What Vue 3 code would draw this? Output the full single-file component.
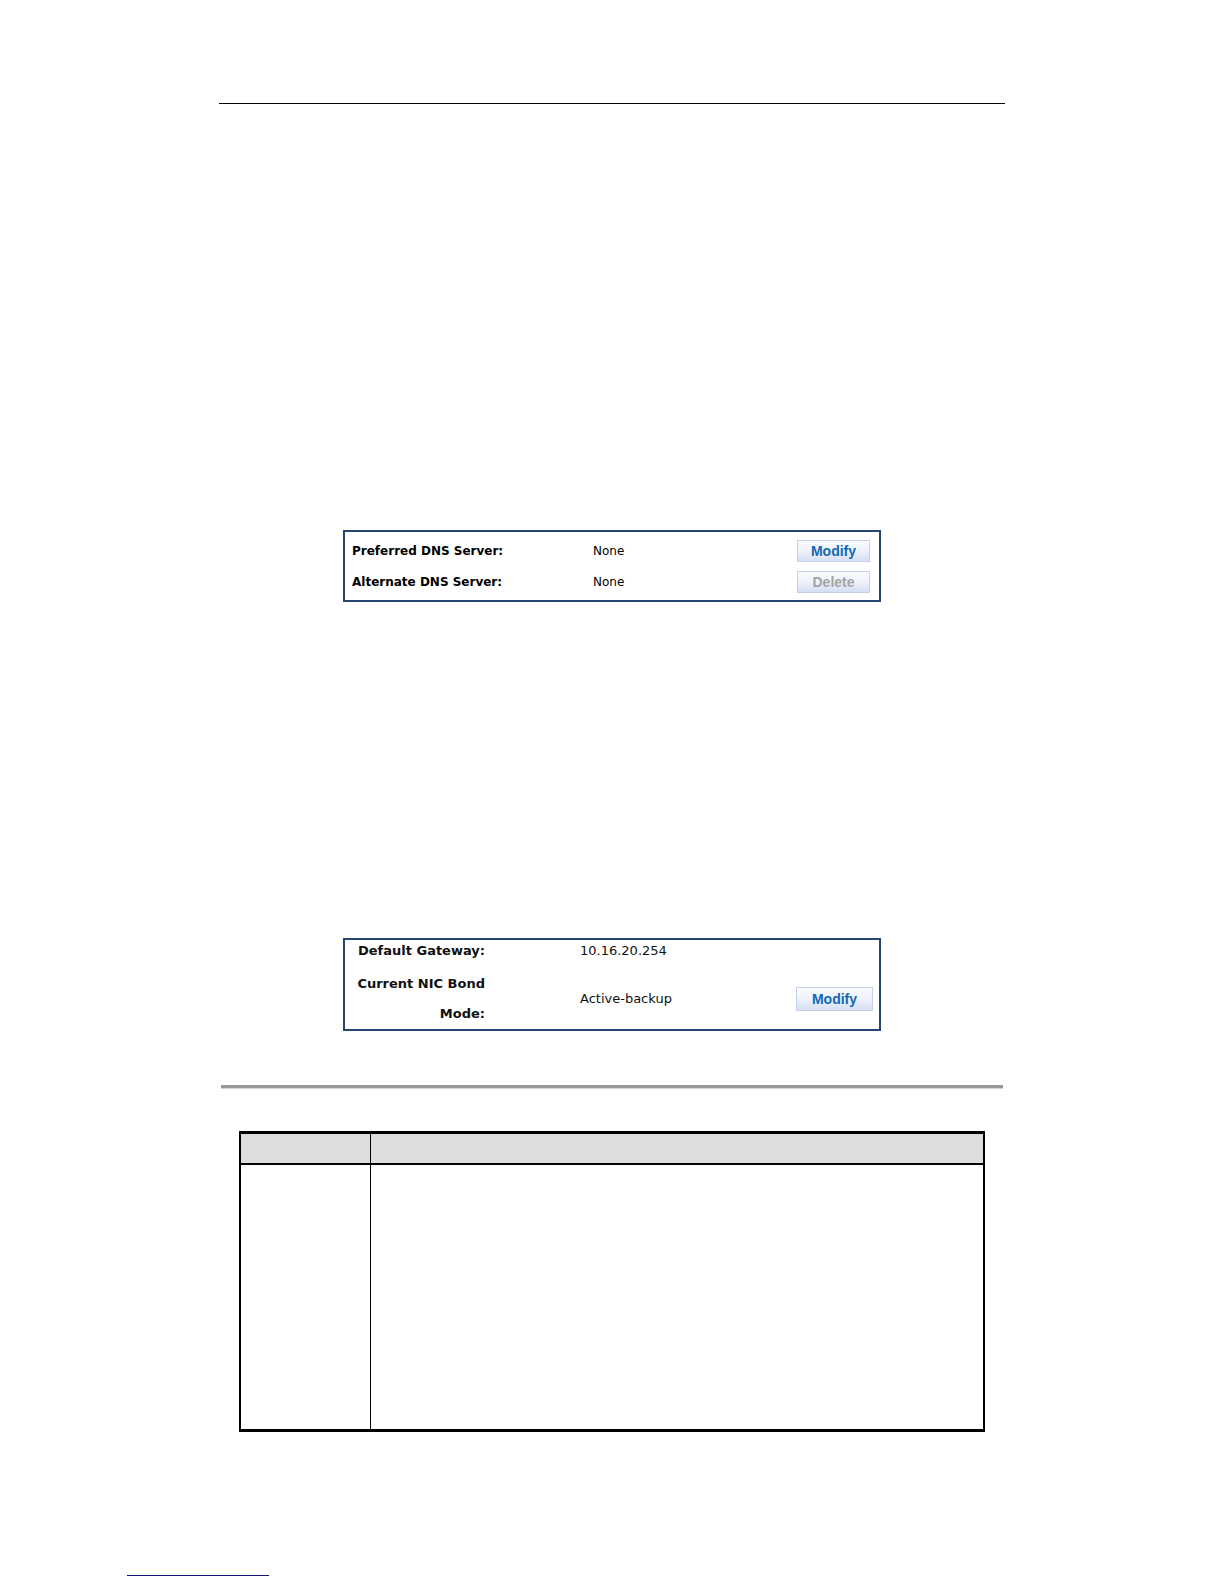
<template>
  <div class="page">
    <main class="content">
      <hr class="header-rule" />

      <section class="panel dns-panel" aria-label="DNS Server">
        <div v-for="row in dnsRows" :key="row.label" class="dns-row">
          <span class="label">{{ row.label }}</span>
          <span class="value">{{ row.value }}</span>
          <button type="button" class="btn" :disabled="row.disabled">{{ row.action }}</button>
        </div>
      </section>

      <section class="panel network-panel" aria-label="Network">
        <div class="network-row">
          <span class="label">Default Gateway:</span>
          <span class="value">{{ gateway }}</span>
        </div>
        <div class="network-row bond-row">
          <span class="label">Current NIC Bond Mode:</span>
          <span class="value">{{ bondMode }}</span>
          <button type="button" class="btn btn-large">Modify</button>
        </div>
      </section>

      <hr class="section-rule" />

      <table class="param-table">
        <thead>
          <tr>
            <th class="name-col"></th>
            <th></th>
          </tr>
        </thead>
        <tbody>
          <tr>
            <td></td>
            <td></td>
          </tr>
        </tbody>
      </table>
    </main>

    <footer class="footer">
      <a href="#" class="footer-link" aria-label="Home"></a>
    </footer>
  </div>
</template>

<script setup>
import { ref } from 'vue'

const dnsRows = ref([
  { label: 'Preferred DNS Server:', value: 'None', action: 'Modify', disabled: false },
  { label: 'Alternate DNS Server:', value: 'None', action: 'Delete', disabled: true }
])

const gateway = ref('10.16.20.254')
const bondMode = ref('Active-backup')
</script>

<style>
body {
  margin: 0;
  background: #fff;
}
</style>

<style scoped>
.page {
  display: flex;
  flex-direction: column;
  min-height: 100vh;
  box-sizing: border-box;
  padding: 103px 16px 8px;
  font-family: 'DejaVu Sans', Verdana, sans-serif;
  color: #111;
}

.content {
  width: 100%;
  max-width: 786px;
  margin: 0 auto;
}

.header-rule {
  height: 1px;
  margin: 0;
  border: none;
  background: #000;
}

.panel {
  box-sizing: border-box;
  max-width: 538px;
  margin: 0 auto;
  border: 2px solid #24476f;
}

.dns-panel {
  display: flex;
  flex-direction: column;
  gap: 9px;
  margin-top: 426px;
  padding: 8px 9px 7px 7px;
  font-size: 12px;
  color: #000;
}

.dns-row {
  display: grid;
  grid-template-columns: 241px 1fr 73px;
  align-items: center;
}

.network-panel {
  margin-top: 336px;
  padding: 0 6px 0 7px;
  font-size: 13px;
}

.network-row {
  display: grid;
  grid-template-columns: 133px 1fr 77px;
  column-gap: 95px;
  align-items: center;
  line-height: 22px;
}

.bond-row {
  padding-top: 7px;
  line-height: 30px;
}

.label {
  font-weight: bold;
}

.network-row .label {
  text-align: right;
}

.btn {
  height: 22px;
  padding: 0;
  border: 1px solid #c6cfe8;
  background: linear-gradient(#fafbff, #eef2fb 50%, #d5dff3);
  font-family: 'Liberation Sans', Arial, sans-serif;
  font-size: 14px;
  font-weight: bold;
  line-height: 20px;
  color: #0f69b4;
  cursor: pointer;
}

.btn:disabled {
  color: #a3a3a3;
  cursor: default;
}

.btn-large {
  height: 24px;
}

.section-rule {
  height: 3px;
  margin: 54px 2px 0;
  border: none;
  border-bottom: 1px solid #d4d4d4;
  background: #999;
}

.param-table {
  width: calc(100% - 40px);
  margin: 42px 20px 0;
  border: 2px solid #000;
  border-width: 3px 2px;
  border-spacing: 0;
  table-layout: fixed;
}

.param-table th,
.param-table td {
  padding: 0;
}

.param-table th {
  height: 29px;
  border-bottom: 2px solid #000;
  background: #ddd;
}

.param-table td {
  height: 264px;
}

.param-table th:first-child,
.param-table td:first-child {
  border-right: 1px solid #000;
}

.name-col {
  width: 129px;
}

.footer {
  margin-top: auto;
  padding: 0 111px;
}

.footer-link {
  display: block;
  width: 142px;
  border-bottom: 1px solid #14147d;
}
</style>
